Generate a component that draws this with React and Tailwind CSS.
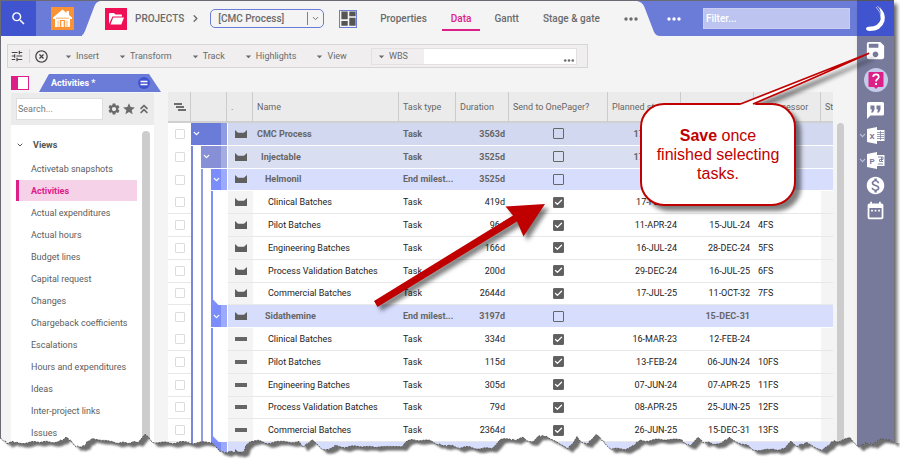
import React, { useState } from "react";
import { ChevronDown, ChevronRight, ChevronsUp, Check } from "lucide-react";
import {
    MdSearch,
    MdTune,
    MdHighlightOff,
    MdDashboard,
    MdSettings,
    MdStar,
    MdSave,
    MdMonetizationOn,
    MdDateRange,
    MdArrowDropDown,
} from "react-icons/md";

const views = [
    "Activetab snapshots",
    "Activities",
    "Actual expenditures",
    "Actual hours",
    "Budget lines",
    "Capital request",
    "Changes",
    "Chargeback coefficients",
    "Escalations",
    "Hours and expenditures",
    "Ideas",
    "Inter-project links",
    "Issues",
];

const tasks = [
    { level: 0, name: "CMC Process", type: "Task", duration: "3563d", start: "17-FEB-23", finish: "" },
    { level: 1, name: "Injectable", type: "Task", duration: "3525d", start: "17-FEB-23", finish: "" },
    { level: 2, name: "Helmonil", type: "End milest...", duration: "3525d", start: "", finish: "" },
    { level: 3, name: "Clinical Batches", type: "Task", duration: "419d", start: "17-FEB-23", finish: "10-APR-24", send: true },
    { level: 3, name: "Pilot Batches", type: "Task", duration: "96d", start: "11-APR-24", finish: "15-JUL-24", pred: "4FS", send: true },
    { level: 3, name: "Engineering Batches", type: "Task", duration: "166d", start: "16-JUL-24", finish: "28-DEC-24", pred: "5FS", send: true },
    { level: 3, name: "Process Validation Batches", type: "Task", duration: "200d", start: "29-DEC-24", finish: "16-JUL-25", pred: "6FS", send: true },
    { level: 3, name: "Commercial Batches", type: "Task", duration: "2644d", start: "17-JUL-25", finish: "11-OCT-32", pred: "7FS", send: true, last: true },
    { level: 2, name: "Sidathemine", type: "End milest...", duration: "3197d", start: "", finish: "15-DEC-31" },
    { level: 3, name: "Clinical Batches", type: "Task", duration: "334d", start: "16-MAR-23", finish: "12-FEB-24", send: true, bar: true },
    { level: 3, name: "Pilot Batches", type: "Task", duration: "115d", start: "13-FEB-24", finish: "06-JUN-24", pred: "10FS", send: true, bar: true },
    { level: 3, name: "Engineering Batches", type: "Task", duration: "305d", start: "07-JUN-24", finish: "07-APR-25", pred: "11FS", send: true, bar: true },
    { level: 3, name: "Process Validation Batches", type: "Task", duration: "79d", start: "08-APR-25", finish: "25-JUN-25", pred: "12FS", send: true, bar: true },
    { level: 3, name: "Commercial Batches", type: "Task", duration: "2364d", start: "26-JUN-25", finish: "15-DEC-31", pred: "13FS", send: true, bar: true, last: true },
    { level: 2, name: "", type: "", duration: "", start: "", finish: "" },
];

const rowColors = ["bg-[#d2d8f0]", "bg-[#dadef1]", "bg-[#d7ddfd]", "bg-white"];
const nameIndent = ["pl-1", "pl-2", "pl-3", "pl-[15px]"];
const headerCell = "border-r border-b-2 border-r-[#cccccc] border-b-[#d0d0d0] px-1 text-left font-normal overflow-hidden";

// outline of the ripped paper along the bottom, [x, y]
const tear = [
    [0, 438], [7, 443], [13, 442], [20, 443], [40, 442], [57, 442], [62, 440], [66, 437], [71, 441], [76, 447], [85, 446],
    [87, 442], [92, 439], [98, 439], [110, 442], [125, 443], [138, 442], [142, 438], [145, 435], [149, 438], [152, 442],
    [170, 443], [180, 442], [192, 443], [212, 442], [216, 447], [221, 452], [234, 452], [240, 454], [244, 452], [246, 445],
    [250, 441], [258, 441], [266, 443], [280, 442], [299, 442], [303, 447], [308, 443], [312, 440], [316, 444], [322, 449],
    [330, 449], [335, 446], [345, 447], [365, 446], [375, 448], [402, 446], [406, 442], [412, 440], [422, 440], [430, 441],
    [438, 444], [445, 446], [452, 445], [460, 448], [470, 447], [480, 449], [492, 448], [496, 444], [500, 440], [508, 439],
    [515, 440], [523, 438], [527, 441], [533, 441], [539, 436], [546, 436], [554, 440], [560, 445], [568, 448], [573, 443],
    [577, 437], [582, 443], [588, 443], [593, 438], [596, 435], [600, 438], [605, 443], [611, 449], [625, 449], [633, 446],
    [640, 440], [650, 441], [660, 439], [672, 440], [680, 439], [687, 445], [692, 445], [698, 437], [703, 442], [716, 444],
    [722, 442], [729, 438], [732, 440], [740, 443], [748, 446], [752, 450], [770, 450], [785, 449], [791, 441], [797, 446],
    [806, 443], [812, 445], [822, 451], [828, 446], [833, 441], [840, 442], [850, 437], [858, 447], [865, 443], [872, 444],
    [880, 440], [890, 439], [894, 443],
];

function tearLine() {
    const out = [];
    for (let i = 0; i < tear.length - 1; i++) {
        const [x1, y1] = tear[i];
        const [x2, y2] = tear[i + 1];
        const steps = Math.max(1, Math.round((x2 - x1) / 2));
        for (let s = 0; s < steps; s++) {
            const x = x1 + ((x2 - x1) * s) / steps;
            const y = y1 + ((y2 - y1) * s) / steps + Math.sin(x * 12.9) * 0.8;
            out.push(`${x.toFixed(1)} ${y.toFixed(1)}`);
        }
    }
    out.push("894 443");
    return out.join(" L");
}

function TornEdge() {
    const line = tearLine();
    return (
        <svg className="absolute inset-x-0 bottom-0 h-[30px] w-full pointer-events-none" viewBox="0 430 900 30" preserveAspectRatio="none" aria-hidden="true">
            <defs>
                <clipPath id="below">
                    <path d={`M${line} L900 443 L900 470 L0 470 Z`} />
                </clipPath>
                <filter id="soft" x="-5%" y="-50%" width="110%" height="200%">
                    <feGaussianBlur stdDeviation="1.3" />
                </filter>
            </defs>
            <path d={`M${line} L900 443 L900 470 L0 470 Z`} fill="#fff" />
            <g clipPath="url(#below)">
                <path d={`M0 400 L${line} L894 400 Z`} transform="translate(5 4)" fill="#6e6e6e" filter="url(#soft)" />
            </g>
            <path d={`M${line}`} fill="none" stroke="#444" strokeWidth="0.8" strokeDasharray="2 1" />
        </svg>
    );
}

function Dots({ className }) {
    return (
        <svg width="14" height="4" viewBox="0 0 14 4" className={className} aria-hidden="true">
            <circle cx="2" cy="2" r="1.7" fill="currentColor" />
            <circle cx="7" cy="2" r="1.7" fill="currentColor" />
            <circle cx="12" cy="2" r="1.7" fill="currentColor" />
        </svg>
    );
}

function TopBar() {
    return (
        <header className="flex h-[35px] items-stretch text-[10px] font-medium text-[#6b6b6b]">
            <button aria-label="Search" className="flex w-[35px] shrink-0 items-center justify-center bg-[#4054d0] text-white">
                <MdSearch size={17} />
            </button>
            <button aria-label="Home" className="flex w-[46px] shrink-0 items-center justify-end bg-[#6b7bd8] pr-2">
                <svg width="23" height="23" viewBox="0 0 23 23">
                    <rect width="23" height="23" fill="#fb9234" />
                    <path d="M11.5 2.5 L2 10.500 V12 H4 V20 H19 V12 H21 V10.500 L18 8 V4 H15.500 V6 Z" fill="#fff" />
                    <path d="M5 11.200 H18" stroke="#fb9234" strokeWidth="0.800" />
                    <path d="M6.200 13.500 H8.500 V20 H6.200 Z M14.500 13.500 H17 V20 H14.500 Z" fill="#fb9234" opacity="0.350" />
                    <path d="M9.700 20 V13.500 H13.300 V20" fill="none" stroke="#fb9234" strokeWidth="1.200" />
                </svg>
            </button>
            <svg width="18" height="35" viewBox="0 0 18 35" className="shrink-0" aria-hidden="true">
                <path d="M0 0 H18 Q14 1 12.500 5 L3 30 Q1 35 -2 35 H0 Z" fill="#6b7bd8" />
            </svg>
            <div className="flex shrink-0 items-center pl-[5px]">
                <svg width="22" height="22" viewBox="0 0 22 22" aria-hidden="true">
                    <rect width="22" height="22" fill="#ee0f55" />
                    <path d="M4 16 V6 Q4 5 5 5 H9 L10.500 6.500 H16 Q17 6.500 17 7.500 V8.500 H7.500 Z" fill="#fff" />
                    <path d="M8.200 9.500 H19 L16.300 16.500 H5.500 Z" fill="#fff" />
                </svg>
                <span className="ml-2">PROJECTS</span>
                <ChevronRight size={11} strokeWidth={3} className="mx-[6px]" />
                <div className="relative ml-[3px]">
                    <select aria-label="Project" className="h-[19px] w-[114px] appearance-none rounded-[5px] border border-[#6b7bd8] bg-transparent pl-[7px] outline-none">
                        <option>[CMC Process]</option>
                    </select>
                    <span className="pointer-events-none absolute inset-y-[3px] right-[4px] flex items-center border-l border-[#6b7bd8] pl-[3px]">
                        <ChevronDown size={9} strokeWidth={2.5} />
                    </span>
                </div>
                <button aria-label="Layout" className="ml-[15px] flex h-[18px] w-[18px] items-center justify-center border border-[#6b7bd8]">
                    <MdDashboard size={19} className="shrink-0 text-[#555]" />
                </button>
            </div>
            <nav className="ml-[14px] flex shrink-0 items-center whitespace-nowrap">
                <a href="#properties" className="px-[9px]">Properties</a>
                <a href="#data" className="ml-[6px] mt-[7px] border-b-2 border-[#dd2088] px-[9px] pb-[4px] text-[#dd2088]">Data</a>
                <a href="#gantt" className="ml-[5px] px-[9px]">Gantt</a>
                <a href="#stage" className="ml-[6px] px-[9px]">Stage &amp; gate</a>
                <button aria-label="More tabs" className="ml-[6px] pl-[9px]"><Dots /></button>
            </nav>
            <div className="-ml-4 flex flex-1 justify-end">
                <svg width="24" height="35" viewBox="0 0 24 35" className="shrink-0" aria-hidden="true">
                    <path d="M0 0 Q5 1 7 5 L17 31 Q19 35 23 35 H24 V0 Z" fill="#6b7bd8" />
                </svg>
                <div className="flex items-center bg-[#6b7bd8] pr-[7px] text-white">
                    <button aria-label="More" className="px-[6px]"><Dots /></button>
                    <input aria-label="Filter" placeholder="Filter..." className="ml-4 h-[21px] w-[147px] border border-[#c9cff2] bg-[#bcc4ef] px-[2px] text-white outline-none placeholder:text-white" />
                </div>
            </div>
        </header>
    );
}

function ToolButton({ children, className }) {
    return (
        <button className={`flex items-center gap-px ${className}`}>
            <MdArrowDropDown size={13} />
            {children}
        </button>
    );
}

function Toolbar() {
    return (
        <div className="ml-[6px] mt-2 flex h-6 w-[581px] items-center border border-[#d6d6d6] bg-[#f0eeee] text-[#6b6b6b]">
            <button aria-label="Settings" className="w-[22px] border-r border-[#d6d6d6] pl-[2px] text-[#444]"><MdTune size={14} /></button>
            <button aria-label="Clear" className="ml-1 text-[#444]"><MdHighlightOff size={15} /></button>
            <ToolButton className="ml-[13px]">Insert</ToolButton>
            <ToolButton className="ml-[17px]">Transform</ToolButton>
            <ToolButton className="ml-[17px]">Track</ToolButton>
            <ToolButton className="ml-[17px]">Highlights</ToolButton>
            <ToolButton className="ml-[17px]">View</ToolButton>
            <div className="ml-auto mr-[10px] flex h-[17px] w-[206px] border border-[#e2e0e0]">
                <label htmlFor="wbs" className="flex w-[52px] items-center gap-px pl-[3px]">
                    <MdArrowDropDown size={13} />
                    WBS
                </label>
                <div className="flex flex-1 items-end bg-white pb-[2px] pr-px">
                    <input id="wbs" className="min-w-0 flex-1 outline-none" />
                    <Dots className="h-[3px] w-[12px]" />
                </div>
            </div>
        </div>
    );
}

function ViewsPanel() {
    const [active, setActive] = useState("Activities");
    return (
        <aside className="flex w-[143px] shrink-0 flex-col">
            <div className="flex h-[19px] shrink-0 items-start">
                <button aria-label="Toggle panel" className="mt-[2px] flex h-[14px] w-[18px] shrink-0 border border-[#dd2088] bg-white">
                    <span className="h-full w-[6px] bg-[#dd2088]" />
                </button>
                <div className="ml-[10px] flex h-[18px] w-[122px] shrink-0 items-center justify-between bg-[#6b7bd8] pl-3 pr-[11px] font-bold text-white [clip-path:polygon(10px_0,110px_0,100%_100%,0_100%)]">
                    Activities *
                    <svg width="12" height="12" viewBox="0 0 12 12" aria-hidden="true">
                        <circle cx="6" cy="6" r="6" fill="#4054d0" />
                        <path d="M2.500 4.500 H9.500 M2.500 7.500 H9.500" stroke="#fff" strokeWidth="1.600" />
                    </svg>
                </div>
            </div>
            <div className="flex h-[32px] shrink-0 items-center bg-[#ebebeb] pl-[5px] text-[#6b6b6b]">
                <input aria-label="Search views" placeholder="Search..." className="mr-1 h-[22px] w-[87px] border border-[#dedede] bg-white px-px outline-none placeholder:text-[#777]" />
                <MdSettings size={14} />
                <MdStar size={14} className="mx-px" />
                <ChevronsUp size={14} strokeWidth={3} />
            </div>
            <div className="flex flex-1 overflow-hidden bg-white pl-[5px] pr-1 pt-[6px]">
                <div className="flex-1">
                    <h2 className="flex h-[27px] items-center gap-[9px] font-bold text-[#555]">
                        <ChevronDown size={8} strokeWidth={3} />
                        Views
                    </h2>
                    <ul className="w-[121px] whitespace-nowrap text-[#5c5c5c]">
                        {views.map((view) => (
                            <li key={view} className="h-[22px]">
                                <button
                                    onClick={() => setActive(view)}
                                    className={
                                        view === active
                                            ? "h-[21px] w-full border-l-[3px] border-[#dd2088] bg-[#f6d2e8] pl-3 text-left font-bold text-[#dd2088]"
                                            : "h-[21px] w-full pl-[15px] text-left"
                                    }
                                >
                                    {view}
                                </button>
                            </li>
                        ))}
                    </ul>
                </div>
                <div className="w-2 rounded-t-full bg-[#cccccc]" />
            </div>
        </aside>
    );
}

function SendBox({ task }) {
    const [checked, setChecked] = useState(!!task.send);
    return (
        <span className="relative mx-auto block h-[11px] w-[11px]">
            <input
                type="checkbox"
                aria-label={`Send ${task.name} to OnePager`}
                checked={checked}
                onChange={(e) => setChecked(e.target.checked)}
                className="block h-[11px] w-[11px] appearance-none rounded-[1px] border border-[#666] checked:bg-[#5f5f5f]"
            />
            {checked && <Check size={9} strokeWidth={3.500} className="pointer-events-none absolute left-px top-px text-white" />}
        </span>
    );
}

function Tree({ level, last }) {
    return (
        <div className="flex h-full">
            {level > 0 && <span className="h-full w-[10px] shrink-0 border-l-2 border-[#7b88da]" />}
            {level > 1 && <span className="h-full w-[10px] shrink-0 border-l-2 border-[#929ce0]" />}
            {level === 3 && (
                <span className="flex h-full flex-1 items-end border-l-2 border-[#7f90fa]">
                    {last && <span className="h-[6px] w-[6px] bg-[#7f90fa] [clip-path:polygon(0_0,100%_100%,0_100%)]" />}
                </span>
            )}
            {level < 3 && (
                <span
                    className={
                        level === 0
                            ? "flex flex-1 items-center border-b border-b-white bg-[#6b7bd8]"
                            : level === 1
                              ? "flex flex-1 items-center border-b border-b-white bg-[#8790d6]"
                              : "flex flex-1 items-center border-b border-b-white bg-[#7b8dfb]"
                    }
                >
                    <ChevronDown size={9} strokeWidth={3.500} className="ml-px text-white" />
                    <span className="ml-auto h-full w-[6px] bg-white/25" />
                </span>
            )}
        </div>
    );
}

function TaskIcon({ bar }) {
    return (
        <svg width="12" height="8" viewBox="0 0 12 8" className="mx-auto block" aria-hidden="true">
            {bar ? <rect y="2" width="12" height="4" fill="#666" /> : <path d="M0 0 L3 2.800 H9 L12 0 V8 H0 Z" fill="#5f5f5f" />}
        </svg>
    );
}

function TaskTable() {
    return (
        <table className="mt-[18px] h-[373px] w-full table-fixed border-separate border-spacing-0 whitespace-nowrap text-[#222]">
            <colgroup>
                <col className="w-[23px]" />
                <col className="w-[36px]" />
                <col className="w-[26px]" />
                <col />
                <col className="w-[57px]" />
                <col className="w-[53px]" />
                <col className="w-[99px]" />
                <col className="w-[73px]" />
                <col className="w-[73px]" />
                <col className="w-[67px]" />
                <col className="w-[12px]" />
            </colgroup>
            <thead className="bg-[#ebebeb] text-[#666]">
                <tr className="h-[31px]">
                    <th className={headerCell}>
                        <svg width="12" height="8" viewBox="0 0 12 8" className="ml-[2px]" aria-hidden="true">
                            <path d="M0 1 H8 M2 4 H10 M4 7 H12" stroke="#444" strokeWidth="1.700" />
                        </svg>
                    </th>
                    <th className={headerCell}></th>
                    <th className={headerCell}>.</th>
                    <th className={headerCell}>Name</th>
                    <th className={headerCell}>Task type</th>
                    <th className={headerCell}>Duration</th>
                    <th className={headerCell}>Send to OnePager?</th>
                    <th className={headerCell}>Planned start</th>
                    <th className={headerCell}>Planned finish</th>
                    <th className={headerCell}>Predecessor</th>
                    <th className="overflow-hidden border-b-2 border-[#d0d0d0] pl-1 text-left font-normal">Status</th>
                </tr>
            </thead>
            <tbody>
                {tasks.map((task, i) => {
                    const leaf = task.level === 3;
                    const line = leaf ? "border-b border-[#e8e8e8]" : "border-b border-white";
                    const cell = `${line} ${rowColors[task.level]}`;
                    const side = leaf ? "border-b border-[#e8e8e8] bg-[#f4f4f4]" : cell;
                    return (
                        <tr key={i} className={leaf ? "h-[22px]" : "h-[22px] font-bold text-[#666]"}>
                            <td className={leaf ? "border-b border-[#e8e8e8] bg-white" : "bg-white"}>
                                <input type="checkbox" aria-label={`Select row ${i + 1}`} className="mx-auto block h-[10px] w-[10px] appearance-none rounded-[1px] border border-[#dcdcdc] bg-white" />
                            </td>
                            <td className="h-[22px] bg-white"><Tree level={task.level} last={task.last} /></td>
                            <td className={`${side} border-l border-l-white`}><TaskIcon bar={task.bar} /></td>
                            <td className={`${cell} ${nameIndent[task.level]}`}>{task.name}</td>
                            <td className={`${cell} pl-1`}>{task.type}</td>
                            <td className={`${cell} pr-1 text-right`}>{task.duration}</td>
                            <td className={cell}><SendBox task={task} /></td>
                            <td className={`${cell} pr-1 text-right`}>{task.start}</td>
                            <td className={`${cell} pr-1 text-right`}>{task.finish}</td>
                            <td className={`${cell} pl-1`}>{task.pred}</td>
                            <td className={side}></td>
                        </tr>
                    );
                })}
            </tbody>
        </table>
    );
}

function OfficeIcon({ letter }) {
    return (
        <span className="flex shrink-0 items-center">
            <ChevronDown size={9} strokeWidth={3} className="text-[#c3c5d8]" />
            <svg width="18" height="17" viewBox="0 0 18 17">
                <path d="M9 3 H17.500 V14 H9" fill="#fff" />
                {letter === "X" ? (
                    <path d="M10 5.500 H17 M10 7.500 H17 M10 9.500 H17 M10 11.500 H17 M13.500 4 V13" stroke="#777a9b" strokeWidth="0.700" />
                ) : (
                    <path d="M11 5 H16 V7.500 H12.500 V9.500 H16 M11 12 H16 M14.500 5 V9" stroke="#777a9b" strokeWidth="0.900" fill="none" />
                )}
                <path d="M0 2 L10 0 V17 L0 15 Z" fill="#fff" />
                <text x="5" y="11.500" textAnchor="middle" fontSize="8" fontWeight="700" fontFamily="Roboto, sans-serif" fill="#777a9b">{letter}</text>
            </svg>
        </span>
    );
}

function RightRail() {
    return (
        <aside className="flex w-[37px] shrink-0 flex-col items-stretch bg-[#777a9b] text-white shadow-[3px_4px_4px_#666]">
            <div className="flex h-9 shrink-0 items-center justify-center border-t border-[#555] bg-[#4054d0]">
                <svg width="22" height="28" viewBox="0 0 22 28" aria-hidden="true">
                    <path d="M14.500 3 Q21 8 19.500 16 Q16.500 26 4.500 26 Q1 25.500 1 23.500 Q1.500 21.500 4 21.800 Q14 21.500 15.800 14 Q16.500 8 14.500 3 Z" fill="#fff" />
                    <path d="M11 2 Q16.500 7 16.200 14 M12.500 1 Q18 6 17.800 12 M15 2.500 Q20 8 19 14" fill="none" stroke="#fff" strokeWidth="0.600" />
                </svg>
            </div>
            <button aria-label="Save" className="flex h-[29px] shrink-0 items-center justify-center"><MdSave size={23} /></button>
            <button aria-label="Help" className="flex h-[30px] shrink-0 items-center justify-center">
                <svg width="24" height="24" viewBox="0 0 24 24">
                    <circle cx="12" cy="12" r="12" fill="#c6cbea" />
                    <path d="M5.500 4 H18.500 Q19.500 4 19.500 5 V18 Q19.500 19 18.500 19 H14 L12 21 L10 19 H5.500 Q4.500 19 4.500 18 V5 Q4.500 4 5.500 4 Z" fill="#dd2088" />
                    <path d="M9.200 9 Q9.200 6.300 12 6.300 Q14.800 6.300 14.800 8.800 Q14.800 10.200 13.200 11.300 Q12 12.200 12 13.500" fill="none" stroke="#fff" strokeWidth="1.700" />
                    <rect x="11.100" y="15" width="1.900" height="1.900" fill="#fff" />
                </svg>
            </button>
            <div className="mt-[3px] flex flex-col">
                <button aria-label="Comments" className="flex h-[25px] items-center justify-center">
                    <svg width="17" height="17" viewBox="0 0 17 17">
                        <path d="M1.500 0 H15.500 Q17 0 17 1.500 V12 Q17 13.500 15.500 13.500 H3.500 L0 17 V1.500 Q0 0 1.500 0 Z" fill="#fff" />
                        <path d="M3.500 3.500 H7.500 V7.500 L6 10.500 H4 L5.200 7.500 H3.500 Z M9.500 3.500 H13.500 V7.500 L12 10.500 H10 L11.200 7.500 H9.500 Z" fill="#777a9b" />
                    </svg>
                </button>
                <button aria-label="Export to Excel" className="flex h-[25px] items-center pl-px"><OfficeIcon letter="X" /></button>
                <button aria-label="Export to PowerPoint" className="flex h-[25px] items-center pl-px"><OfficeIcon letter="P" /></button>
                <button aria-label="Costs" className="flex h-[25px] items-center justify-center"><MdMonetizationOn size={21} /></button>
                <button aria-label="Calendar" className="flex h-[25px] items-center justify-center"><MdDateRange size={21} /></button>
            </div>
        </aside>
    );
}

function Arrow() {
    return (
        <svg width="190" height="120" viewBox="370 196 190 120" className="pointer-events-none absolute left-[370px] top-[196px] drop-shadow-[4px_4px_2px_rgba(0,0,0,0.5)]" aria-hidden="true">
            <path d="M374 301 L513 215.500 L505.500 206.500 L545 204 L523.500 236.500 L517 221.500 L377.500 307 Z" fill="#c00000" />
        </svg>
    );
}

function Callout() {
    return (
        <div className="absolute right-[104px] top-[103px] drop-shadow-[5px_5px_2px_rgba(0,0,0,0.5)]">
            <div className="flex h-[103px] w-[156px] items-center justify-center rounded-[24px] border-2 border-[#c00000] bg-white px-2 text-center font-[Liberation_Sans,Arial,sans-serif] text-[16px] leading-[19px] text-[#c00000]">
                <p><strong>Save</strong> once<br />finished selecting<br />tasks.</p>
            </div>
            <svg width="136" height="56" viewBox="738 50 136 56" className="absolute -top-[53px] left-[98px]" aria-hidden="true">
                <path d="M740 105.500 L741 104 L868 53.500 Q805 82 754 104 L757 105.500 Z" fill="#fff" />
                <path d="M740.500 104 L868.500 53.500 Q805 82 753 104" fill="none" stroke="#c00000" strokeWidth="1.800" strokeLinejoin="round" />
            </svg>
        </div>
    );
}

export default function App() {
    return (
        <div className="relative flex h-screen overflow-hidden bg-white pr-[6px] font-[Roboto,sans-serif] text-[9px] leading-[12px]">
            <main className="flex min-w-0 flex-1 flex-col border-l border-t border-[#6a6a72] bg-[#f4f4f4]">
                <TopBar />
                <Toolbar />
                <div className="mt-[6px] flex min-h-0 flex-1 items-stretch pl-[10px] pr-[13px]">
                    <ViewsPanel />
                    <div className="ml-[14px] flex min-w-0 flex-1 items-start overflow-hidden">
                        <TaskTable />
                    </div>
                    <div className="ml-1 mt-[49px] w-[7px] rounded-t-full bg-[#cccccc]" />
                </div>
            </main>
            <RightRail />
            <TornEdge />
            <Arrow />
            <Callout />
        </div>
    );
}
